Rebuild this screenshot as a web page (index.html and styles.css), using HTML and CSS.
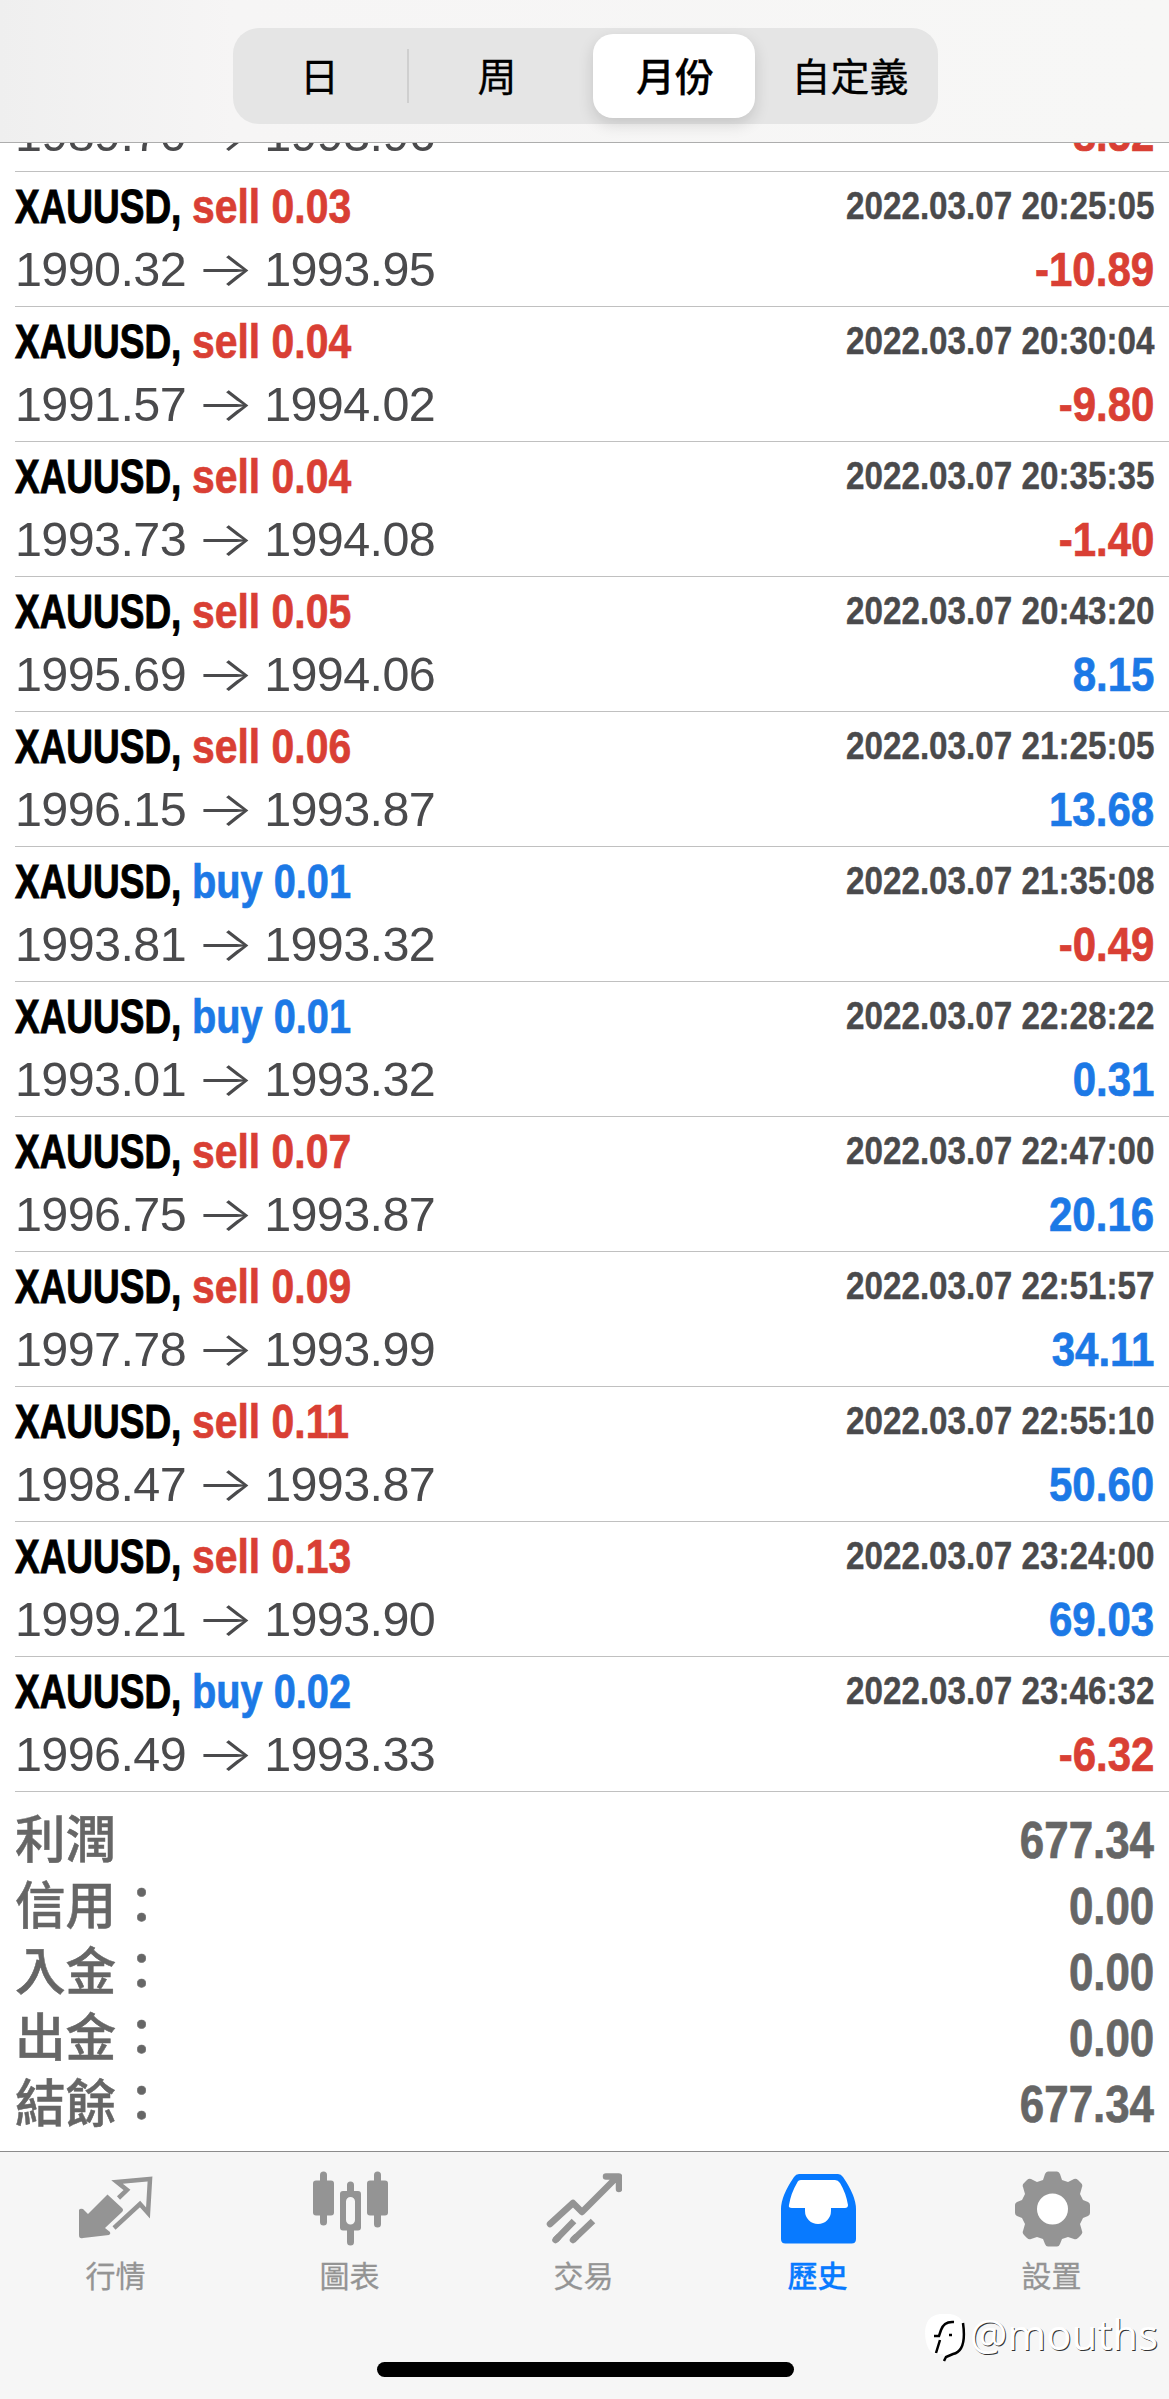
FILE: index.html
```html
<!DOCTYPE html>
<html lang="zh-Hant">
<head>
<meta charset="utf-8">
<title>歷史</title>
<link rel="stylesheet" href="styles.css">
</head>
<body>
<div class="app">
  <header class="header">
    <nav class="segments">
      <div class="segment first"><span>日</span></div>
      <div class="segment"><span>周</span></div>
      <div class="segment selected"><span>月份</span></div>
      <div class="segment last"><span>自定義</span></div>
    </nav>
  </header>
  <main class="content">
    <ul class="deals" id="deals"></ul>
    <dl class="summary">
      <div class="total"><dt>利潤</dt><dd>677.34</dd></div>
      <div class="total"><dt>信用：</dt><dd>0.00</dd></div>
      <div class="total"><dt>入金：</dt><dd>0.00</dd></div>
      <div class="total"><dt>出金：</dt><dd>0.00</dd></div>
      <div class="total"><dt>結餘：</dt><dd>677.34</dd></div>
    </dl>
  </main>
  <footer class="footer">
    <nav class="tabs">
      <div class="tab">
        <svg class="icon" viewBox="0 0 76 76"><path d="M30 24 44 37Q46 39 44 41L27 57 32 61Q33 63 31 64L5 67Q1 68 1 64V39Q2 37 5 38L10 43 29 24Q30 23 30 24Z" fill="currentColor"/><path d="M40.500 27 49 19 39 11 72 8 70 42 62 33 36 57" fill="none" stroke="currentColor" stroke-width="4.500"/></svg>
        <span>行情</span>
      </div>
      <div class="tab">
        <svg class="icon" viewBox="0 0 76 76"><g fill="currentColor"><rect x="1" y="9.500" width="21" height="35" rx="3"/><rect x="8" y="0.500" width="7" height="54" rx="3.500"/><rect x="55" y="9.500" width="21" height="35" rx="3"/><rect x="62" y="0.500" width="7" height="56" rx="3.500"/><path fill-rule="evenodd" d="M35 20V14a3.500 3.500 0 0 1 7 0V20H46a3 3 0 0 1 3 3V56.500a3 3 0 0 1-3 3H42V71a3.500 3.500 0 0 1-7 0V59.500H31a3 3 0 0 1-3-3V23a3 3 0 0 1 3-3ZM38.500 26a4.500 4.500 0 0 0-4.500 4.500V49a4.500 4.500 0 0 0 9 0V30.500a4.500 4.500 0 0 0-4.500-4.500Z"/></g></svg>
        <span>圖表</span>
      </div>
      <div class="tab">
        <svg class="icon" viewBox="0 0 76 76"><g fill="none" stroke="currentColor" stroke-width="6.500"><path stroke-linecap="round" stroke-linejoin="round" d="M4 53 27 32 36 41 70 7M60 5.500H73V18"/><path stroke-linecap="round" d="M9.500 69 12 66.500M27 69 29.500 66.500"/><path d="M9.500 69 28 50M27 69 47 50"/></g></svg>
        <span>交易</span>
      </div>
      <div class="tab active">
        <svg class="icon" viewBox="0 0 76 76"><path fill="currentColor" d="M19 3H58Q61 3 63 6 76 25 76 38V68Q76 72.500 71.500 72.500H5.500Q1 72.500 1 68V38Q1 25 14 6 16 3 19 3Z"/><path fill="#fff" d="M21 9H55Q58 9 60 12 66 22 68 34 68 37 65 37H51V40A13 13 0 0 1 25 40V37H12Q8 37 9 34 11 22 17 12 18 9 21 9Z"/></svg>
        <span>歷史</span>
      </div>
      <div class="tab">
        <svg class="icon" viewBox="0 0 76 76"><g fill="currentColor"><path d="M32 .500H43Q45 .500 46 3L48 9 54 11 60 8Q62 7 64 9L67 12Q69 14 68 16L66 23 69 29 74 31Q76 32 76 34V42Q76 44 74 45L69 47 66 53 68 60Q69 62 67 64L64 67Q62 69 60 68L54 66 48 68 46 73Q45 75.500 43 75.500H34Q32 75.500 31 73L29 68 23 66 17 68Q15 69 13 67L10 64Q8 62 9 60L11 53 8 47 3 45Q1 44 1 42V34Q1 32 3 31L8 29 11 23 9 16Q8 14 10 12L13 9Q15 7 17 8L23 11 29 9 31 3Q32 .500 34 .500Z"/></g><circle cx="38.500" cy="38" r="15.500" fill="#fff"/></svg>
        <span>設置</span>
      </div>
    </nav>
    <div class="home-indicator"></div>
    <div class="watermark">
      <svg viewBox="0 0 42 50"><path fill="#fff" d="M16 1H26Q41 3 41 20 41 39 29 41L21 47 19 41H12Q2 40 1 20 1 3 16 1Z"/><path fill="none" stroke="#000" stroke-width="2.500" d="M30 9Q20 8 17 17L15 23H10M16 27 12 40M25 22H28M39 10Q43 38 29 41L22 44 20 48"/></svg>
      <span>@mouths</span>
    </div>
  </footer>
</div>
<script src="deals.js"></script>
</body>
</html>
```
FILE: deals.js
```js
const deals = [
  [null, "1989.70", "1993.96", null, "-8.52"],
  ["sell 0.03", "1990.32", "1993.95", "2022.03.07 20:25:05", "-10.89"],
  ["sell 0.04", "1991.57", "1994.02", "2022.03.07 20:30:04", "-9.80"],
  ["sell 0.04", "1993.73", "1994.08", "2022.03.07 20:35:35", "-1.40"],
  ["sell 0.05", "1995.69", "1994.06", "2022.03.07 20:43:20", "8.15"],
  ["sell 0.06", "1996.15", "1993.87", "2022.03.07 21:25:05", "13.68"],
  ["buy 0.01", "1993.81", "1993.32", "2022.03.07 21:35:08", "-0.49"],
  ["buy 0.01", "1993.01", "1993.32", "2022.03.07 22:28:22", "0.31"],
  ["sell 0.07", "1996.75", "1993.87", "2022.03.07 22:47:00", "20.16"],
  ["sell 0.09", "1997.78", "1993.99", "2022.03.07 22:51:57", "34.11"],
  ["sell 0.11", "1998.47", "1993.87", "2022.03.07 22:55:10", "50.60"],
  ["sell 0.13", "1999.21", "1993.90", "2022.03.07 23:24:00", "69.03"],
  ["buy 0.02", "1996.49", "1993.33", "2022.03.07 23:46:32", "-6.32"]
];

const titleLine = (order, time) => `
    <div class="line title-line">
      <span class="symbol">XAUUSD,</span>
      <span class="order ${order.startsWith("sell") ? "sell red" : "buy blue"}">${order}</span>
      <time class="time">${time}</time>
    </div>`;

document.getElementById("deals").innerHTML = deals.map(([order, open, close, time, profit]) => `
  <li class="deal ${order ? "" : "scrolled"}">${order ? titleLine(order, time) : ""}
    <div class="line price-line">
      <span class="price">${open}</span>
      <span class="arrow">→</span>
      <span class="price">${close}</span>
      <span class="profit ${profit.startsWith("-") ? "red" : "blue"}">${profit}</span>
    </div>
  </li>`).join("");
```
FILE: styles.css
```css
* {
  box-sizing: border-box;
  margin: 0;
  padding: 0;
}

body {
  background: #fff;
  font-family: "Liberation Sans", "Noto Sans CJK TC", sans-serif;
}

.app {
  display: flex;
  flex-direction: column;
  width: 1169px;
  height: 2399px;
  overflow: hidden;
}

.header {
  flex: none;
  height: 143px;
  padding: 28px 231px 0 233px;
  background: linear-gradient(90deg, #efefef, #f6f5f5 20%, #f7f7f6);
  border-bottom: 1px solid #adadad;
}

.segments {
  display: grid;
  grid-template-columns: 171px 184px 172px 178px;
  height: 96px;
  background: #e5e5e5;
  border-radius: 26px;
}

.segment {
  display: flex;
  align-items: center;
  justify-content: center;
  padding-bottom: 5px;
  padding-left: 2px;
  color: #000;
  font: 400 39px/56px "Noto Sans CJK TC", sans-serif;
  -webkit-text-stroke: 0.3px currentColor;
}

.segment.first {
  position: relative;
}

.segment.first::after {
  content: "";
  position: absolute;
  left: 174px;
  top: 21px;
  width: 2px;
  height: 54px;
  background: #cfcfcf;
}

.segment.selected {
  margin: 6px 5px;
  background: #fff;
  border-radius: 20px;
  font-weight: 500;
  box-shadow: 0 6px 16px rgba(0, 0, 0, 0.14);
}

.content {
  flex: none;
  height: 2008px;
  overflow: hidden;
}

.deals {
  margin-top: -40px;
  list-style: none;
}

.deal {
  height: 135px;
  margin-left: 15px;
  padding: 3px 15px 0 0;
  border-bottom: 1px solid #c0c0c0;
}

.deal.scrolled {
  height: 69px;
  padding-top: 0;
}

.line {
  display: flex;
  align-items: baseline;
  height: 63px;
  line-height: 62px;
  white-space: nowrap;
}

.title-line {
  line-height: 64px;
}

.title-line,
.profit {
  font-size: 48px;
  font-weight: bold;
}

.symbol {
  width: 177px;
  transform: scaleX(0.77);
  transform-origin: left;
  -webkit-text-stroke: 1px currentColor;
}

.order {
  transform-origin: left;
  -webkit-text-stroke: 0.7px currentColor;
}

.sell {
  transform: scaleX(0.852);
}

.buy {
  transform: scaleX(0.828);
}

.time {
  align-self: flex-start;
  margin-left: auto;
  color: #4a4a4c;
  font-size: 38.500px;
  line-height: 61px;
  transform: scaleX(0.863);
  transform-origin: right;
  -webkit-text-stroke: 0.4px currentColor;
}

.price {
  color: #4a4a4c;
  font-size: 48.500px;
  letter-spacing: -0.600px;
}

.arrow {
  width: 78px;
  color: #4a4a4c;
  font: 300 48px/40px Inter, sans-serif;
  text-align: center;
  transform: scaleX(1.28);
}

.profit {
  margin-left: auto;
  transform: scaleX(0.875);
  transform-origin: right;
  -webkit-text-stroke: 0.7px currentColor;
}

.red {
  color: #d93f34;
}

.blue {
  color: #1c79e6;
}

.summary {
  padding: 11px 15px 0 15px;
  color: #666;
}

.total {
  display: flex;
  align-items: baseline;
  justify-content: space-between;
  height: 66px;
  line-height: 66px;
}

.total dt {
  font: 500 50.600px/66px "Noto Sans CJK TC", sans-serif;
  -webkit-text-stroke: 0.5px currentColor;
}

.total dd {
  font-size: 51px;
  font-weight: bold;
  transform: scaleX(0.86);
  transform-origin: right;
  -webkit-text-stroke: 0.7px currentColor;
}

.footer {
  position: relative;
  display: flex;
  flex: none;
  flex-direction: column;
  justify-content: space-between;
  align-items: center;
  height: 248px;
  padding-bottom: 22px;
  background: #f6f6f6;
  border-top: 1px solid #8c8c8c;
}

.tabs {
  display: grid;
  grid-template-columns: repeat(5, 234px);
  width: 1172px;
  padding-top: 19px;
}

.tab {
  display: flex;
  flex-direction: column;
  align-items: center;
  color: #949494;
  font: 30px/36px "Noto Sans CJK TC", sans-serif;
  -webkit-text-stroke: 0.3px currentColor;
}

.tab span {
  margin-top: 9px;
}

.tab.active {
  color: #087aff;
  font-weight: 500;
}

.icon {
  width: 76px;
  height: 76px;
}

.home-indicator {
  width: 417px;
  height: 15px;
  margin-left: 2px;
  background: #000;
  border-radius: 8px;
}

.watermark {
  position: absolute;
  right: 11px;
  bottom: 36px;
  display: flex;
  gap: 4px;
  color: #fff;
  font: 42px/42px "Open Sans", sans-serif;
  text-shadow: 1px 1px 0 #333;
}

.watermark svg {
  width: 42px;
  height: 50px;
}
```
